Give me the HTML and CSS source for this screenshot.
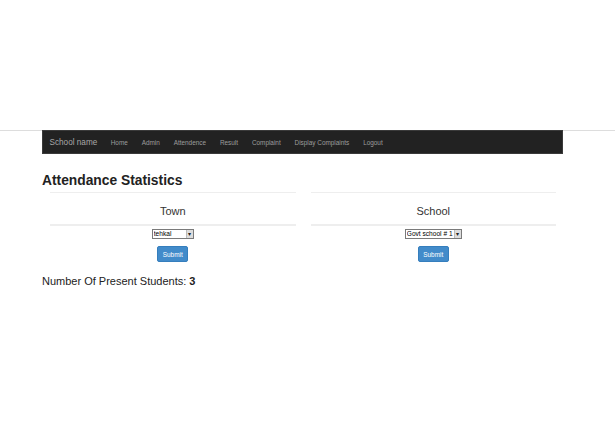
FILE: index.html
```html
<!DOCTYPE html>
<html lang="en">
<head>
    <meta charset="UTF-8">
    <title>Attendance Statistics</title>
    <link rel="stylesheet" href="styles.css">
</head>
<body>
    <div class="topline">
        <nav class="navbar">
            <a class="brand" href="#">School name</a>
            <ul class="nav-links">
                <li><a href="#">Home</a></li>
                <li><a href="#">Admin</a></li>
                <li><a href="#">Attendence</a></li>
                <li><a href="#">Result</a></li>
                <li><a href="#">Complaint</a></li>
                <li><a href="#">Display Complaints</a></li>
                <li><a href="#">Logout</a></li>
            </ul>
        </nav>
    </div>

    <div class="container">
        <h2>Attendance Statistics</h2>

        <div class="row">
            <form class="col">
                <h4 class="col-title">Town</h4>
                <div class="select-wrap">
                    <select class="small-select town-select">
                        <option>tehkal</option>
                    </select>
                    <span class="select-arrow">&#9662;</span>
                </div>
                <button type="button" class="btn-submit">Submit</button>
            </form>
            <form class="col">
                <h4 class="col-title">School</h4>
                <div class="select-wrap">
                    <select class="small-select school-select">
                        <option>Govt school # 1</option>
                    </select>
                    <span class="select-arrow">&#9662;</span>
                </div>
                <button type="button" class="btn-submit">Submit</button>
            </form>
        </div>

        <p class="present">Number Of Present Students: <b>3</b></p>
    </div>
</body>
</html>
```

FILE: styles.css
```css
* {
    margin: 0;
    padding: 0;
    box-sizing: border-box;
}

body {
    font-family: "Liberation Sans", Arial, sans-serif;
    color: #333;
    background: #fff;
    padding-top: 130px;
}

.topline {
    border-top: 1px solid #ddd;
}

.navbar {
    width: 521px;
    height: 24px;
    margin: -1px 0 0 42px;
    background: #222;
    border: 1px solid #3a3a3a;
    display: flex;
    align-items: center;
}

.brand {
    font-size: 8.2px;
    color: #a8a8a8;
    text-decoration: none;
    padding: 0 6.5px;
}

.nav-links {
    list-style: none;
    display: flex;
}

.nav-links a {
    display: block;
    font-size: 6.4px;
    color: #9d9d9d;
    text-decoration: none;
    padding: 0 6.95px;
}

.container {
    width: 521px;
    margin: 0 0 0 42px;
}

h2 {
    font-size: 13.8px;
    font-weight: bold;
    color: #222;
    margin-top: 19px;
    line-height: 16px;
}

.row {
    display: flex;
}

.col {
    flex: 1;
    padding: 0 7px 0 8px;
    display: flex;
    flex-direction: column;
    align-items: center;
}

.col-title {
    align-self: stretch;
    font-size: 11px;
    font-weight: normal;
    text-align: center;
    line-height: 14px;
    padding: 11px 0 6px;
    border-top: 1px solid #eee;
    border-bottom: 2px solid #eee;
    margin-top: 3px;
}

.select-wrap {
    position: relative;
    margin-top: 3px;
    height: 10px;
}

.small-select {
    appearance: none;
    -webkit-appearance: none;
    height: 10px;
    font-family: "Liberation Sans", Arial, sans-serif;
    font-size: 6.6px;
    line-height: 8px;
    color: #000;
    background: #fff;
    border: 1px solid #7a7a7a;
    border-radius: 0;
    padding: 0 8px 0 1px;
    display: block;
}

.town-select {
    width: 42px;
}

.school-select {
    width: 57px;
}

.select-arrow {
    position: absolute;
    right: 1px;
    top: 1px;
    width: 7px;
    height: 8px;
    background: #ddd;
    border-left: 1px solid #bbb;
    font-size: 6px;
    line-height: 8px;
    text-align: center;
    color: #222;
}

.btn-submit {
    margin-top: 7px;
    width: 31px;
    height: 16px;
    font-family: "Liberation Sans", Arial, sans-serif;
    font-size: 6.4px;
    color: #fff;
    background: #428bca;
    border: 1px solid #357ebd;
    border-radius: 2px;
}

.present {
    font-size: 11px;
    margin-top: 13px;
    color: #222;
}

.present b {
    font-weight: bold;
}
```
